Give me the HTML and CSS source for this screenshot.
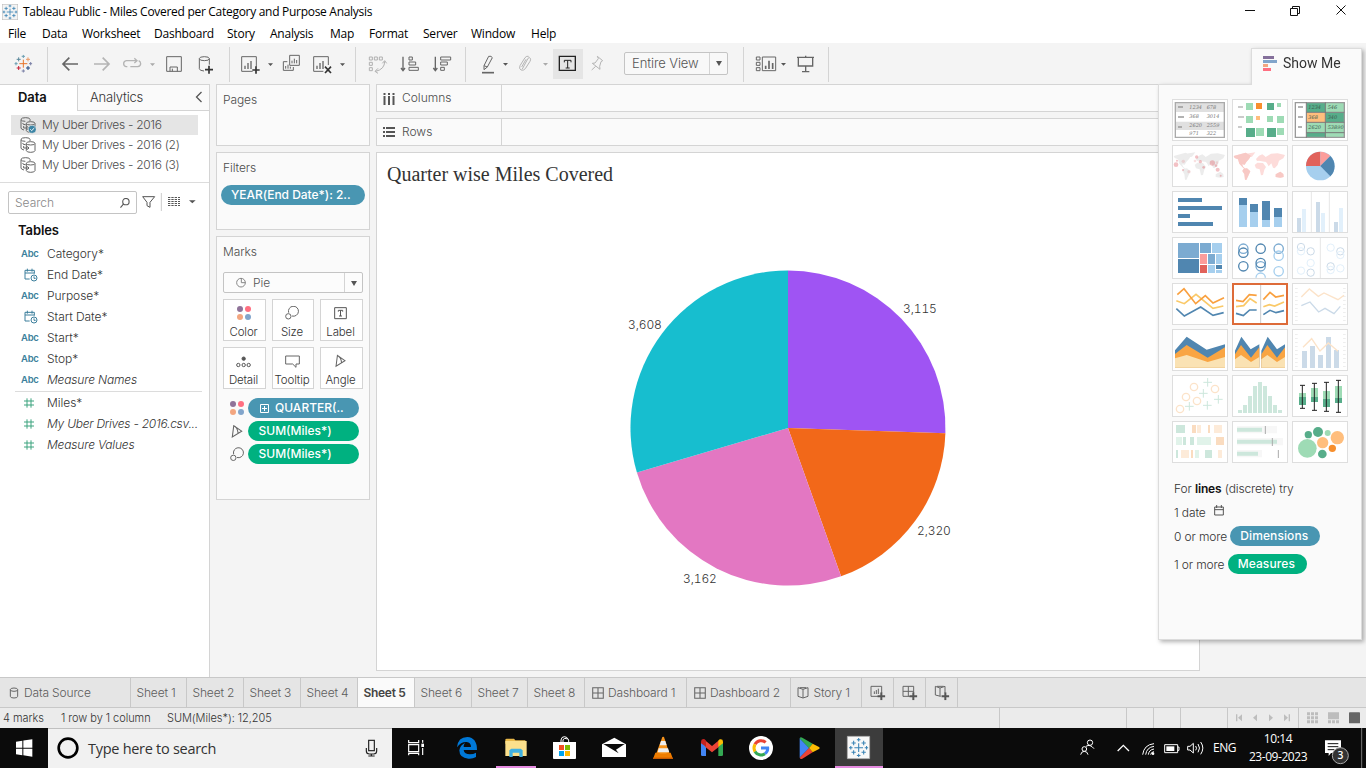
FILE: index.html
```html
<!DOCTYPE html>
<html lang="en">
<head>
<meta charset="utf-8">
<title>Tableau Public - Miles Covered per Category and Purpose Analysis</title>
<link rel="stylesheet" href="styles.css">
</head>
<body>
<svg class="defs" width="0" height="0">
  <defs>
    <symbol id="crosses" viewBox="0 0 54 54">
      <path class="k1" d="M27 15v24M15 27h24"/>
      <path class="k2" d="M27 0v10M22 5h10M0 27h10M5 22v10"/>
      <path class="k3" d="M44 27h10M49 22v10M27 44v10M22 49h10"/>
      <path class="k4" d="M13 8v12M7 14h12"/>
      <path class="k5" d="M41 8v12M35 14h12"/>
      <path class="k6" d="M13 34v12M7 40h12"/>
      <path class="k7" d="M41 34v12M35 40h12"/>
    </symbol>
    <symbol id="datasource" viewBox="0 0 48 48">
      <g fill="none" stroke="#666" stroke-width="3">
        <path d="M30 12V7Q30 2 17 2T3 7v26q0 4 9 6M3 8q2 5 13 5"/>
        <path d="M19 20v21q1 5 13 5t13-5V20"/><ellipse cx="32" cy="19" rx="13" ry="5"/>
        <path d="M8 18q0 6 9 5M11 27v6h15M22 28l5 5-5 5"/>
      </g>
    </symbol>
    <symbol id="calclock" viewBox="0 0 42 42">
      <g fill="none" stroke="#3c7f9c" stroke-width="3"><path d="M17 33H3V7h28v10M3 15h28M10 2v9M24 2v9"/><circle cx="30" cy="30" r="9"/><path d="M30 25v6h5"/></g>
    </symbol>
    <symbol id="hash" viewBox="0 0 30 30"><path d="M9 1v28M21 1v28M0 9h30M0 21h30" fill="none" stroke="#3da37f" stroke-width="3"/></symbol>
    <symbol id="dots" viewBox="0 0 42 42"><circle cx="9" cy="9" r="9" fill="#8f7399"/><circle cx="33" cy="9" r="9" fill="#ff6f81"/><circle cx="9" cy="33" r="9" fill="#f3a680"/><circle cx="33" cy="33" r="9" fill="#82a5cb"/></symbol>
    <symbol id="size" viewBox="0 0 42 42"><g fill="none" stroke="#666" stroke-width="3"><path d="M11 20A15 15 0 1 1 21 30"/><circle cx="10" cy="31" r="8"/></g></symbol>
    <symbol id="angle" viewBox="0 0 32 36"><path d="M7 2L3 33 29 17ZM7 2Q17 6 19 22" fill="none" stroke="#666" stroke-width="3"/></symbol>
    <symbol id="grid4" viewBox="0 0 34 34"><path d="M2 2h30v30H2zM17 2v30M2 17h30" fill="none" stroke="#666" stroke-width="3"/></symbol>
    <symbol id="book" viewBox="0 0 34 36"><path d="M17 7L2 2v26l15 5 15-5V2ZM17 7v26M7 2h20" fill="none" stroke="#666" stroke-width="3"/></symbol>
    <symbol id="plus" viewBox="0 0 24 24"><path d="M12 0v24M0 12h24" stroke="#555" stroke-width="6"/></symbol>
  </defs>
</svg>

<header class="titlebar">
  <svg class="applogo blue" width="16" height="16" viewBox="-2 -2 58 58"><rect x="-2" y="-2" width="58" height="58" fill="#f4f4f4" stroke="#bbb" stroke-width="4"/><use href="#crosses" width="54" height="54"/></svg>
  <span class="apptitle">Tableau Public - Miles Covered per Category and Purpose Analysis</span>
  <svg class="winctl" width="126" height="20" viewBox="1240 0 126 20" fill="none" stroke="#111"><path d="M1245 10.500h10M1290.500 8.500h7v7h-7zM1292.500 8V6.500h7v7H1298M1336.500 5.500l9 9M1345.500 5.500l-9 9"/></svg>
</header>

<nav class="menubar"><span>File</span><span>Data</span><span>Worksheet</span><span>Dashboard</span><span>Story</span><span>Analysis</span><span>Map</span><span>Format</span><span>Server</span><span>Window</span><span>Help</span></nav>

<div class="toolbar">
  <svg class="logo" width="47" height="41" viewBox="0 129 141 123"><use href="#crosses" x="43" y="164" width="54" height="54"/></svg>
  <i class="sep"></i>
  <svg width="181" height="41" viewBox="144 129 543 123" fill="none" stroke="#666" stroke-width="3">
    <path stroke-width="5" d="M234 192H190M208 173l-19 19 19 19"/><path stroke="#b4b4b4" stroke-width="5" d="M282 192h44M308 173l19 19-19 19"/>
    <path stroke="#b4b4b4" d="M382 200h-4q-7-2-7-9t8-9h30M403 175l8 7-8 7M410 182M391 200h22q9-2 9-9 0-6-6-9" stroke-width="4"/>
    <path fill="#aaa" stroke="none" d="M450 190h15l-7.500 8z"/>
    <path d="M500 170h44v44h-44zM510 214v-13h22v13M517 214v-8"/>
    <ellipse cx="613" cy="176" rx="15" ry="6"/><path d="M598 176v30q0 6 14 7M628 176v18"/><path stroke="#333" stroke-width="5" d="M627 197v24M615 209h24"/>
  </svg>
  <i class="sep"></i>
  <svg width="125" height="41" viewBox="690 129 375 123" fill="none" stroke="#666" stroke-width="3">
    <path d="M758 214h-33v-44h44v30"/><path stroke-width="4" d="M735 207v-10M744 207v-18M753 207v-24"/><path stroke="#333" stroke-width="5" d="M768 199v22M757 210h22"/>
    <path fill="#555" stroke="none" d="M804 190h15l-7.500 8zM1020 190h15l-7.500 8z"/>
    <path d="M869 166h29v30h-29zM862 185h-12v26h30v-10"/><path d="M876 190v-8M883 190v-14M890 190v-10M857 206v-8M864 206v-12M871 206v-6"/>
    <path d="M970 214h-29v-44h44v25"/><path stroke-width="4" d="M951 207v-10M960 207v-18M969 207v-24"/><path stroke="#333" stroke-width="5" d="M975 200l18 19M993 200l-18 19"/>
  </svg>
  <i class="sep"></i>
  <svg width="109" height="41" viewBox="1068 129 327 123" fill="none" stroke="#666" stroke-width="3">
    <path stroke="#b0b0b0" d="M1108 171h9v9h-9zM1123 171h9v9h-9zM1138 171h9v9h-9zM1108 187h9v9h-9zM1108 203h9v9h-9zM1154 184q0 24-27 30M1147 190l7-8 6 8M1134 205l-9 9 9 6"/>
    <path d="M1209 170v41M1203 204l6 8 6-8" stroke-width="4"/><path d="M1227 171h10v9h-10zM1227 186h20v9h-20zM1227 202h28v9h-28z"/>
    <path d="M1306 170v41M1300 204l6 8 6-8" stroke-width="4"/><path d="M1322 171h30v9h-30zM1322 186h20v9h-20zM1322 202h11v9h-11z"/>
  </svg>
  <i class="sep"></i>
  <svg width="87" height="41" viewBox="168 129 261 123" fill="none" stroke="#666" stroke-width="3">
    <path d="M222 197l14-28q8-2 11 4l-15 28-10 8zM222 197l10 4"/><path stroke-width="5" d="M216 218h36"/>
    <path fill="#555" stroke="none" d="M279 189h15l-7.500 8z"/><path fill="#aaa" stroke="none" d="M399 189h15l-7.500 8z"/>
    <path stroke="#b4b4b4" d="M337 207l17-32q4-5 7 0 2 4-1 9l-14 22q-6 7-13 4-7-4-3-13l15-24q5-6 11-4M348 178l-13 23"/>
  </svg>
  <div class="textbtn"><svg width="30" height="30" viewBox="429 147 90 90" fill="none" stroke="#222" stroke-width="3"><path d="M448 169h48v42h-48z" stroke-width="4"/><path d="M463 187v-6h20v6M473 181v23M467 204h12"/></svg></div>
  <svg width="41" height="41" viewBox="519 129 123 123" fill="none" stroke="#b4b4b4" stroke-width="3"><path d="M562 169l16 13-5 3-4 14 1 9-23-18 8-1 10-13zM557 199l-12 11"/></svg>
  <div class="fit"><span>Entire View</span><b class="caret"></b></div>
  <i class="sep last"></i>
  <svg width="84" height="41" viewBox="1002 129 252 123" fill="none" stroke="#666" stroke-width="3">
    <path d="M1039 171h11v9h-11zM1039 187h11v9h-11zM1039 203h11v9h-11zM1057 171h40v41h-40z"/><path d="M1067 207v-10M1077 207v-25M1088 207v-18" stroke-width="5"/>
    <path fill="#555" stroke="none" d="M1113 189h15l-7.500 8z"/>
    <path d="M1161 172h51M1187 167v5M1165 173v25h43v-25M1187 198v16M1176 215h22" stroke-width="4"/>
  </svg>
  <i class="sep"></i>
</div>

<main class="work">
  <aside class="side">
    <div class="sidetabs"><b>Data</b><span>Analytics<svg width="8" height="12" viewBox="0 0 8 12"><path d="M6.500 1L1.500 6l5 5" fill="none" stroke="#555" stroke-width="1.300"/></svg></span></div>
    <ul class="sources">
      <li class="on"><svg width="16" height="17" viewBox="0 0 48 51"><use href="#datasource" width="48" height="48"/><circle cx="37" cy="37" r="12" fill="#3c85a5" stroke="#e6e6e6" stroke-width="2"/><path d="M31 37l4 4 8-8" fill="none" stroke="#fff" stroke-width="3"/></svg>My Uber Drives - 2016</li>
      <li><svg width="16" height="16"><use href="#datasource"/></svg>My Uber Drives - 2016 (2)</li>
      <li><svg width="16" height="16"><use href="#datasource"/></svg>My Uber Drives - 2016 (3)</li>
    </ul>
    <div class="searchrow">
      <div class="search"><span>Search</span><svg width="10" height="10" viewBox="0 0 11 11" fill="none" stroke="#555" stroke-width="1.200"><circle cx="6.500" cy="4" r="3.500"/><path d="M4 6.500L.5 10.500"/></svg></div>
      <svg width="60" height="24" viewBox="411 315 180 72" fill="none" stroke="#555" stroke-width="3"><path d="M428 338h36l-14 17v15l-9-5v-10z"/><path stroke="#ccc" d="M484 327v54"/><path stroke-dasharray="7 3" d="M504 340.500h36M504 346.500h36M504 352.500h36M504 358.500h36M504 364.500h36"/><path d="M567 349h20l-10 9z" fill="#555" stroke="none"/></svg>
    </div>
    <h2>Tables</h2>
    <ul class="fields">
      <li><em>Abc</em>Category*</li>
      <li><svg width="14" height="14"><use href="#calclock"/></svg>End Date*</li>
      <li><em>Abc</em>Purpose*</li>
      <li><svg width="14" height="14"><use href="#calclock"/></svg>Start Date*</li>
      <li><em>Abc</em>Start*</li>
      <li><em>Abc</em>Stop*</li>
      <li class="it mn"><em>Abc</em>Measure Names</li>
    </ul>
    <ul class="fields meas">
      <li><svg width="10" height="10"><use href="#hash"/></svg>Miles*</li>
      <li class="it csv"><svg width="10" height="10"><use href="#hash"/></svg>My Uber Drives - 2016.csv...</li>
      <li class="it mn"><svg width="10" height="10"><use href="#hash"/></svg>Measure Values</li>
    </ul>
  </aside>

  <section class="cards">
    <div class="card pages"><h3>Pages</h3></div>
    <div class="card filters"><h3>Filters</h3><div class="pill dim year">YEAR(End Date*): 2..</div></div>
    <div class="card marks"><h3>Marks</h3>
      <div class="marktype"><svg width="11" height="11" viewBox="0 0 33 33" fill="none" stroke="#888" stroke-width="3"><circle cx="15" cy="17" r="13"/><path d="M16 17V3M16 17h13"/></svg><span>Pie</span><b class="caret"></b></div>
      <div class="btns">
        <div><svg width="14" height="14"><use href="#dots"/></svg>Color</div>
        <div><svg width="14" height="14"><use href="#size"/></svg>Size</div>
        <div><svg width="13" height="14" viewBox="0 0 39 42" fill="none" stroke="#555" stroke-width="3"><path d="M2 5h35v33H2zM13 17v-4h13v4M19.500 13v17M15 30h9"/></svg>Label</div>
        <div><svg width="15" height="14" viewBox="0 0 45 42" fill="none" stroke="#555" stroke-width="3"><circle cx="23" cy="14" r="5" fill="#555"/><circle cx="7" cy="33" r="5"/><circle cx="23" cy="33" r="5"/><circle cx="38" cy="33" r="5"/></svg>Detail</div>
        <div><svg width="15" height="14" viewBox="0 0 45 42" fill="none" stroke="#666" stroke-width="3"><path d="M2 6h41v24H33v10L23 30H2z"/></svg>Tooltip</div>
        <div><svg width="11" height="14"><use href="#angle"/></svg>Angle</div>
      </div>
      <div class="enc"><svg width="14" height="14"><use href="#dots"/></svg><div class="pill dim q"><svg width="9" height="9" viewBox="0 0 9 9" fill="none" stroke="#fff"><path d="M.5.5h8v8h-8zM4.500 2v5M2 4.500h5"/></svg>QUARTER(..</div></div>
      <div class="enc"><svg width="14" height="13"><use href="#angle"/></svg><div class="pill mea">SUM(Miles*)</div></div>
      <div class="enc"><svg width="14" height="15"><use href="#size"/></svg><div class="pill mea">SUM(Miles*)</div></div>
    </div>
  </section>

  <section class="view">
    <div class="shelf"><span><svg width="12" height="13" viewBox="0 0 12 13"><path d="M1.500 1v2M1.500 4v9M6 1v2M6 4v9M10.500 1v2M10.500 4v9" stroke="#555" stroke-width="2"/></svg>Columns</span></div>
    <div class="shelf"><span><svg width="12" height="13" viewBox="0 0 12 13"><path d="M0 2h2M3 2h9M0 6h2M3 6h9M0 10h2M3 10h9" stroke="#555" stroke-width="2"/></svg>Rows</span></div>
    <div class="canvas">
      <h1>Quarter wise Miles Covered</h1>
      <svg class="pie" width="816" height="470" viewBox="380 198 816 470">
        <path fill="#9f54f3" d="M788 428V270.500A157.500 157.500 0 0 1 945.400 433.200Z"/>
        <path fill="#f26819" d="M788 428L945.400 433.200A157.500 157.500 0 0 1 841.060 576.300Z"/>
        <path fill="#e377c2" d="M788 428L841.060 576.300A157.500 157.500 0 0 1 636.900 472.500Z"/>
        <path fill="#17becf" d="M788 428L636.900 472.500A157.500 157.500 0 0 1 788 270.500Z"/>
        <g class="val"><text x="903" y="313">3,115</text><text x="917" y="535">2,320</text><text x="683" y="583">3,162</text><text x="628" y="329">3,608</text></g>
      </svg>
    </div>
  </section>
</main>

<footer class="tabs">
  <span class="src"><svg width="10" height="12" viewBox="0 0 30 36" fill="none" stroke="#666" stroke-width="3"><ellipse cx="15" cy="8" rx="11" ry="5"/><path d="M4 8v20q0 5 11 5t11-5V8"/></svg>Data Source</span>
  <span class="w56">Sheet 1</span><span>Sheet 2</span><span>Sheet 3</span><span>Sheet 4</span><span class="on">Sheet 5</span><span>Sheet 6</span><span class="w56">Sheet 7</span><span>Sheet 8</span>
  <span class="dash"><svg width="12" height="12"><use href="#grid4"/></svg>Dashboard 1</span><span class="dash d2"><svg width="12" height="12"><use href="#grid4"/></svg>Dashboard 2</span>
  <span class="story"><svg width="12" height="12"><use href="#book"/></svg>Story 1</span>
  <span class="new"><svg width="16" height="16" viewBox="0 0 48 48" fill="none" stroke="#666" stroke-width="3"><path d="M24 34H3V4h32v20M13 27v-8M19 27V15M25 27V11"/><use href="#plus" x="22" y="22" width="24" height="24"/></svg></span>
  <span class="new"><svg width="16" height="16" viewBox="0 0 48 48" fill="none" stroke="#666" stroke-width="3"><path d="M24 34H3V4h32v20M19 4v30M3 19h32"/><use href="#plus" x="22" y="22" width="24" height="24"/></svg></span>
  <span class="new"><svg width="16" height="16" viewBox="0 0 48 48" fill="none" stroke="#666" stroke-width="3"><path d="M20 34L4 30V4l14 5 15-5v20M18 9v25M9 4h20"/><use href="#plus" x="22" y="22" width="24" height="24"/></svg></span>
</footer>

<div class="status">
  <span class="s1">4 marks</span><span class="s2">1 row by 1 column</span><span class="s3">SUM(Miles*): 12,205</span>
  <svg width="367" height="20" viewBox="117 113 1101 60" fill="#bdbdbd">
    <path fill="none" stroke="#c8c8c8" stroke-width="3" d="M118.500 113v60M499.500 113v60M580.500 113v60M661.500 113v60M802.500 113v60M1015.500 113v60"/>
    <path d="M828 132h4v21h-4zM846 132v21l-12-10.500zM891 132v21l-12-10.500zM927 132v21l12-10.500zM972 132v21l12-10.500zM986 132h4v21h-4z"/>
    <path d="M1041 126h9v9h-9zM1053 126h9v9h-9zM1065 126h9v9h-9zM1041 138h9v9h-9zM1053 138h9v9h-9zM1065 138h9v9h-9zM1041 150h9v9h-9zM1053 150h9v9h-9zM1065 150h9v9h-9zM1104 126h33v21h-33zM1104 150h9v9h-9zM1116 150h9v9h-9zM1128 150h9v9h-9z"/><rect x="1167" y="126" width="33" height="33" rx="2" fill="#666"/>
  </svg>
</div>

<div class="taskbar">
  <svg width="48" height="40" viewBox="0 174 144 120"><path fill="#fff" d="M48 215l19-3v21H48zM70 211.500l27-3.500v25H70zM48 236h19v20l-19-3zM70 236h27v24l-27-4z"/></svg>
  <div class="tsearch">
    <svg width="40" height="40" viewBox="144 174 120 120"><circle cx="204" cy="234" r="28" fill="none" stroke="#000" stroke-width="8"/></svg>
    <span>Type here to search</span>
    <svg width="40" height="40" viewBox="1056 174 120 120" fill="none" stroke="#222" stroke-width="3.500"><rect x="1106" y="211" width="17" height="31"/><path d="M1099 234v9q0 9 9 9h13q9 0 9-9v-9M1114 252v7M1105 258h19"/></svg>
  </div>
  <svg width="50" height="40" viewBox="1176 174 150 120" fill="none" stroke="#fff" stroke-width="3.500"><path d="M1226 210v8h30v-8M1226 224h30v21h-30zM1226 256v-6h30v6M1268 210v8M1268 234v21"/><rect x="1264" y="221" width="8" height="10" fill="#fff" stroke="none"/></svg>
  <svg width="49" height="40" viewBox="1326 174 147 120"><path fill="#0078d7" d="M1371 232Q1374 201 1402 201Q1431 203 1431 240H1391Q1393 253 1410 253Q1420 253 1428 248V261Q1418 267 1405 266Q1378 264 1378 241Q1381 225 1395 219Q1390 225 1391 231H1413Q1413 217 1400 216Q1383 215 1371 232Z"/></svg>
  <div class="task run"><svg width="49" height="40" viewBox="63 174 147 120"><path fill="#e9b949" d="M106 209q0-3 4-3h22l4 5h30v10h-60z"/><path fill="#fbe08c" d="M106 213h64v45h-64z"/><path fill="#41b1e1" d="M118 261v-20l6-5h28l6 5v20h-10v-13h-20v13z"/></svg></div>
  <svg width="49" height="40" viewBox="210 174 147 120"><path fill="none" stroke="#fff" stroke-width="3" d="M273 220v-10q1-10 10-10t13 10v9M279 217v-8q4-7 14-2"/><path fill="#fff" d="M249 216h69v49q0 2-3 2h-63q-3 0-3-2z"/><path fill="#f25022" d="M267 225h15v15h-15z"/><path fill="#7fba00" d="M285 225h15v15h-15z"/><path fill="#00a4ef" d="M267 243h15v15h-15z"/><path fill="#ffb900" d="M285 243h15v15h-15z"/></svg>
  <svg width="49" height="40" viewBox="357 174 147 120"><path fill="#fff" d="M396 223l37-20 35 20v38h-72z"/><path fill="#0b0b0b" d="M400 222h64l-26 17 8 11z"/></svg>
  <svg width="49" height="40" viewBox="504 174 147 120"><path fill="#f7941d" d="M577 201q3-2 5 0l17 52h-41z"/><path fill="#eee" d="M573 213h13l4 13h-21zM566 235h28l4 12h-35z"/><path fill="#ef7d00" d="M556 248h8q15 7 30 0h8l7 19h-60z"/><path fill="#c95a00" d="M549 263h60v4h-60z"/></svg>
  <svg width="49" height="40" viewBox="651 174 147 120"><path fill="#4285f4" d="M693 215l15 11v32h-11q-4 0-4-4z"/><path fill="#34a853" d="M745 226l14-11v39q0 4-4 4h-10z"/><path fill="#ea4335" d="M705 211l21 17 21-17v19l-21 17-21-17z"/><path fill="#c5221f" d="M693 215q0-10 11-7l4 4v18l-15-10z"/><path fill="#fbbc04" d="M759 215q0-9-10-7l-4 4v18l14-10z"/></svg>
  <svg width="49" height="40" viewBox="798 174 147 120"><circle cx="873" cy="234" r="36" fill="#fff"/><g fill="none" stroke-width="9"><path stroke="#ea4335" d="M855 223a21 21 0 0 1 32-6"/><path stroke="#fbbc05" d="M855 223a23 23 0 0 0 0 22"/><path stroke="#34a853" d="M855 245a21 21 0 0 0 30 6"/><path stroke="#4285f4" d="M885 251q9-7 8-17H873"/></g></svg>
  <svg width="50" height="40" viewBox="945 174 150 120"><path fill="#4285f4" d="M989 205v58l29-29z"/><path fill="#34a853" d="M989 205q2-5 8-2l31 18-11 13z"/><path fill="#ea4335" d="M989 263q2 6 8 3l31-19-11-13z"/><path fill="#fbbc04" d="M1028 221l19 10q5 3 0 6l-19 10-11-13z"/></svg>
  <div class="task run active"><svg class="blue" width="48" height="40" viewBox="1095 174 144 120"><path fill="#f8f8f8" stroke="#aaa" stroke-width="2" d="M1132 199h67v67h-67z"/><use href="#crosses" x="1137" y="204" width="58" height="58"/></svg></div>
  <i class="grow"></i>
  <svg width="130" height="40" viewBox="350 174 390 120" fill="none" stroke="#fff" stroke-width="3">
    <circle cx="389" cy="218" r="8"/><path d="M377 229q12-8 24 7M373 240"/><circle cx="372" cy="237" r="7"/><path d="M361 254q2-10 11-10t11 10"/>
    <path d="M472 243l17-17 17 17" stroke-width="4"/>
    <path d="M547 254q4-30 34-33M556 254q3-22 25-25M564 254q2-15 17-17M571 254q1-8 10-9"/><circle cx="578" cy="251" r="4" fill="#fff" stroke="none"/>
    <path d="M613 224h39v24h-39zM652 231h4v10h-4"/><path d="M618 229h24v14h-24z" fill="#fff" stroke="none"/>
    <path d="M682 229h7l10-9v29l-10-9h-7zM706 228q5 7 0 13M713 222q9 12 0 25M721 216q13 18 0 37"/>
  </svg>
  <span class="lang">ENG</span>
  <div class="clock"><span>10:14</span><span>23-09-2023</span></div>
  <svg width="58" height="40" viewBox="1044 174 174 120"><path fill="#fff" d="M1095 211h48v38h-30l-7 9v-9h-11z"/><path d="M1103 221h32M1103 230h32M1103 239h20" stroke="#111" stroke-width="3"/><circle cx="1141" cy="257" r="24" fill="#333" stroke="#aaa" stroke-width="3"/><text class="badge" x="1141" y="268">3</text><path d="M1205 174v120" stroke="#777" stroke-width="3"/></svg>
</div>

<aside class="showme">
  <div class="smtab"><svg width="14" height="15" viewBox="0 0 42 45"><path fill="#85709b" d="M0 0h33v9H0z"/><path fill="#82a5cb" d="M0 12h42v9H0z"/><path fill="#f3a680" d="M0 24h15v9H0z"/><path fill="#ff6f81" d="M0 36h24v9H0z"/></svg>Show Me</div>
  <div class="smbody">
    <div class="thumbs">
      <svg viewBox="0 0 168 126"><path fill="#e0e0e0" d="M9 9h150v30H9zM9 68h150v25H9z"/><path fill="none" stroke="#aaa" stroke-width="4" d="M10 11h147v104H10z"/><path stroke="#999" stroke-width="5" d="M18 24h15M18 54h18M18 84h12"/><g class="tn"><text x="52" y="30">1234</text><text x="104" y="30">678</text><text x="52" y="57">368</text><text x="104" y="57">3014</text><text x="52" y="84">2620</text><text x="104" y="84">2559</text><text x="52" y="108">971</text><text x="104" y="108">322</text></g></svg>
      <svg viewBox="0 0 168 126"><path stroke="#bbb" stroke-width="5" d="M18 24h15M18 54h18M18 84h12"/><path fill="#9edbb5" d="M42 12h21v21H42zM135 12h12v12h-12zM42 51h21v21H42zM105 51h18v18h-18zM135 51h21v21h-21zM72 87h24v24H72zM135 87h21v21h-21z"/><path fill="#57ad8a" d="M105 12h21v21h-21zM42 87h27v27H42zM105 87h27v27h-27z"/><path fill="#f78f2d" d="M72 12h18v18H72z"/><path fill="#ffbe7d" d="M72 51h12v12H72z"/></svg>
      <svg viewBox="0 0 168 126"><path fill="#57ad8a" d="M44 10h57v30H44zM101 41h56v29h-56zM44 101h57v15H44z"/><path fill="#9edbb5" d="M101 10h56v30h-56zM44 71h113v30H44zM101 101h56v15h-56z"/><path fill="#ffbe7d" d="M44 41h57v30H44z"/><path fill="none" stroke="#9a9a9a" stroke-width="4" d="M10 11h147v104H10z"/><path fill="none" stroke="#777" stroke-width="3" d="M43 10v106M100 10v106M43 40h114M43 70h114M43 101h114"/><path stroke="#999" stroke-width="5" d="M18 24h15M18 54h15M18 84h12"/><g class="tn dk"><text x="49" y="30">1234</text><text x="107" y="30">546</text><text x="49" y="61">368</text><text x="107" y="61">340</text><text x="49" y="91">2620</text><text x="107" y="91">53890</text></g></svg>

      <svg viewBox="0 0 168 126"><g fill="#ececec"><path id="world" d="M5 33l22-6 14-4 8 5 8 4-6 10-8 9-5 8-8-1 4 8 8 7-8-4-12-13-4-13-10-4zM42 26l28-4-10 13-8 2zM35 71l10-1 10 9-5 11-7 15-4-1-2-17-6-9zM72 42l9-10 10-4 8 6 6 9-8 7-16-3-6 1zM68 60l8-7 17 1 9 12-5 8-4 16-6 1-4-18-11-3zM101 36l16-10 20-1 22 5-5 10-13 7-4 13-9 10-5-2-5-13-8 9-6-11-8-6zM131 88l14-8 9 7 1 9-10 2-14-2z"/></g><g fill="#e15f68" opacity=".38"><circle cx="12" cy="59" r="7"/><circle cx="15" cy="47" r="3"/><circle cx="34" cy="49" r="5" opacity=".5"/><circle cx="74" cy="36" r="5"/><circle cx="69" cy="48" r="4" opacity=".5"/><circle cx="85" cy="50" r="5"/><circle cx="33" cy="75" r="3"/><circle cx="51" cy="80" r="5" opacity=".5"/><circle cx="95" cy="67" r="4"/><circle cx="121" cy="54" r="8"/><circle cx="135" cy="53" r="4" opacity=".5"/><circle cx="132" cy="62" r="4"/><circle cx="137" cy="74" r="6"/><circle cx="146" cy="92" r="3"/></g></svg>
      <svg viewBox="0 0 168 126"><use href="#world" fill="#fddcda"/><path fill="#f8c9c5" d="M5 33l22-6 14-4 8 5 8 4-6 10-8 9-5 8-8-1 4 8 8 7-8-4-12-13-4-13-10-4zM35 71l10-1 10 9-5 11-7 15-4-1-2-17-6-9zM131 88l14-8 9 7 1 9-10 2-14-2z"/></svg>
      <svg viewBox="0 0 168 126"><circle cx="85" cy="63" r="43" fill="#a6cfee"/><path fill="#e1625b" d="M85 63H42a43 43 0 0 1 43-43z"/><path fill="#fc9d9b" d="M85 63V20a43 43 0 0 1 30 13z"/><path fill="#5086b0" d="M85 63l30-30a43 43 0 0 1 0 61z"/></svg>

      <svg viewBox="0 0 168 126"><path fill="#5086b0" d="M18 21h72v12H18zM18 45h132v12H18zM18 69h36v12H18zM18 93h105v12H18z"/></svg>
      <svg viewBox="0 0 168 126"><path fill="#a6cfee" d="M21 42h24v66H21zM54 63h24v45H54zM90 87h24v21H90zM126 78h24v30h-24z"/><path fill="#5086b0" d="M21 21h24v21H21zM54 39h24v24H54zM90 30h24v57H90zM126 51h24v27h-24z"/></svg>
      <svg viewBox="0 0 168 126"><path stroke="#e6e6e6" stroke-width="3" d="M58 3v120M112 3v120"/><path fill="#cbdae8" d="M15 81h12v42H15zM72 33h12v90H72zM126 93h12v30h-12z"/><path fill="#e2f0fb" d="M30 54h12v69H30zM87 66h12v57H87zM141 51h12v72h-12z"/></svg>

      <svg viewBox="0 0 168 126"><path fill="#7cabd1" d="M18 18h63v45H18zM84 18h33v30H84zM108 51h21v30h-21z"/><path fill="#5086b0" d="M18 66h63v42H18zM132 84h18v12h-18z"/><path fill="#a6cfee" d="M120 18h30v30h-30zM132 51h18v30h-18zM108 84h21v24h-21zM132 99h18v9h-18z"/><path fill="#fc9d9b" d="M84 51h21v30H84z"/><path fill="#e1625b" d="M84 84h21v24H84z"/></svg>
      <svg viewBox="0 0 168 126" fill="none" stroke-width="4"><g stroke="#7cabd1"><circle cx="34" cy="35" r="14"/><circle cx="86" cy="88" r="14"/><circle cx="140" cy="35" r="14"/></g><g stroke="#5086b0"><circle cx="34" cy="47" r="14"/><circle cx="34" cy="88" r="14"/><circle cx="86" cy="35" r="14"/><circle cx="86" cy="78" r="14"/></g><g stroke="#a6cfee"><circle cx="140" cy="56" r="14"/><circle cx="140" cy="103" r="14"/><path d="M72 122a14 14 0 0 1 28 0"/></g></svg>
      <svg viewBox="0 0 168 126" fill="none" stroke-width="3"><path stroke="#e6e6e6" d="M85 3v120"/><g stroke="#cbdae8"><circle cx="27" cy="30" r="11"/><circle cx="56" cy="43" r="11"/><circle cx="56" cy="107" r="11"/><circle cx="145" cy="43" r="11"/><circle cx="116" cy="88" r="11"/></g><g stroke="#e2f0fb"><circle cx="27" cy="43" r="11"/><circle cx="56" cy="78" r="11"/><circle cx="27" cy="101" r="11"/><circle cx="116" cy="32" r="11"/><circle cx="145" cy="54" r="11"/><circle cx="145" cy="94" r="11"/><circle cx="116" cy="99" r="11"/></g></svg>

      <svg viewBox="0 0 168 126" fill="none" stroke-width="5"><path stroke="#fac968" d="M13 53l24 9 35-28 51 42 31-7"/><path stroke="#f9a03f" d="M16 35l20-18 35 45 29-24 23 22 33-16"/><path stroke="#5086b0" d="M13 77l24 22 49-27 37 25 32-8"/></svg>
      <svg class="picked" viewBox="0 0 168 126" fill="none" stroke-width="5"><path stroke="#ccc" stroke-width="3" d="M86 6v114"/><path stroke="#fac968" d="M12 71l23-3 19-21 20 13M94 71l18-6 16 4 28-12"/><path stroke="#f9a03f" d="M12 52l21 4 19-21 22 2M94 50l20-22 17 14 25-5"/><path stroke="#5086b0" d="M12 91l22 7 19-17h21M94 95l20-13 18 7 24-6"/></svg>
      <svg viewBox="0 0 168 126" fill="none" stroke-width="4"><path stroke="#eee" stroke-dasharray="3 9" stroke-width="8" d="M13 15v102M157 15v102"/><path stroke="#fce3c9" d="M28 42l24-24 27 22 17-10 42 20 18-13"/><path stroke="#cbdae8" d="M28 68l26-11 26 30 19-11 27 16 19-22"/></svg>

      <svg viewBox="0 0 168 126"><path fill="#5086b0" d="M9 64l35-41 60 39 55-16v70H9z"/><path fill="#f9a543" d="M9 75l35-27 63 38 52-31v61H9z"/><path fill="#fae2b3" d="M9 88l35-10 63 21 52-15v32H9z"/></svg>
      <svg viewBox="0 0 168 126"><path fill="#5086b0" d="M9 65l19-42 28 38 26-15v70H9zM88 65l19-42 28 38 24-15v70H88z"/><path fill="#f9a543" d="M9 76l18-28 30 38 25-31v61H9zM88 76l18-28 29 38 24-31v61H88z"/><path fill="#fae2b3" d="M9 91l18-13 30 21 25-15v32H9zM88 91l18-13 29 21 24-15v32H88z"/></svg>
      <svg viewBox="0 0 168 126"><path fill="none" stroke="#eee" stroke-dasharray="3 9" stroke-width="8" d="M13 15v102M157 15v102"/><path fill="#cbdae8" d="M30 66h15v51H30zM54 51h15v66H54zM78 78h15v39H78zM102 24h15v93h-15zM126 63h15v54h-15z"/><path fill="none" stroke="#fce3c9" stroke-width="4" d="M33 55l26-26 25 37 25-24 29 25"/></svg>

      <svg viewBox="0 0 168 126" fill="none" stroke-width="4"><g stroke="#fce3c9"><circle cx="66" cy="36" r="11"/><circle cx="129" cy="42" r="11"/><circle cx="42" cy="66" r="11"/><circle cx="75" cy="78" r="11"/><circle cx="24" cy="102" r="11"/></g><path stroke="#cde7dc" stroke-width="3" d="M94 22h26M107 9v26M81 55h26M94 42v26M126 73h26M139 60v26M39 94h26M52 81v26M93 91h26M106 78v26"/></svg>
      <svg viewBox="0 0 168 126"><path fill="#cde7dc" d="M18 105h12v9H18zM33 90h12v24H33zM48 63h12v51H48zM63 33h12v81H63zM78 21h12v93H78zM93 33h12v81H93zM108 63h12v51h-12zM123 90h12v24h-12zM138 105h12v9h-12z"/></svg>
      <svg viewBox="0 0 168 126"><path fill="#9edbb5" d="M21 54h21v12H21zM57 39h21v27H57zM93 48h21v24H93zM129 33h21v36h-21z"/><path fill="#57ad8a" d="M21 66h21v24H21zM57 66h21v15H57zM93 72h21v24H93zM129 69h21v15h-21z"/><path fill="none" stroke="#222" stroke-width="3" d="M24 31h15M31 31v69M24 100h15M60 25h15M67 25v81M60 106h15M96 22h15M103 22v87M96 109h15M132 16h15M139 16v96M132 112h15"/></svg>

      <svg viewBox="0 0 168 126"><path fill="#cde7dc" d="M12 12h27v24H12zM33 48h9v24h-9zM54 48h12v24H54zM12 87h6v24h-6zM99 87h21v24H99z"/><path fill="#fadcc0" d="M60 12h12v24H60zM108 12h6v24h-6zM132 48h24v24h-24zM57 87h6v24h-6z"/><path fill="#fdebd9" d="M75 12h12v24H75zM126 12h24v24h-24zM27 87h24v24H27zM138 87h12v24h-12z"/><path fill="#e1f3ea" d="M12 48h18v24H12zM75 48h42v24H75zM69 87h12v24H69z"/></svg>
      <svg viewBox="0 0 168 126"><path fill="#f7f7f7" d="M15 15h120v22H15zM15 51h138v22H15zM15 87h75v22H15z"/><path fill="#cde7dc" d="M15 20h75v12H15zM15 56h120v12H15zM15 92h63v12H15z"/><path stroke="#aaa" stroke-width="3" d="M100 15v24M121 51v24M139 87v24"/></svg>
      <svg viewBox="0 0 168 126"><g fill="#57ad8a"><circle cx="49" cy="41" r="11"/><circle cx="78" cy="33" r="15"/><circle cx="91" cy="99" r="13"/></g><g fill="#9edbb5"><circle cx="107" cy="36" r="9"/><circle cx="46" cy="82" r="28"/></g><g fill="#ffbe7d"><circle cx="92" cy="65" r="17"/><circle cx="136" cy="50" r="20"/></g><circle cx="121" cy="82" r="11" fill="#f78f2d"/></svg>
    </div>
    <div class="hint">
      <p class="h1">For <b>lines</b> (discrete) try</p>
      <p class="h2">1 date<svg width="10" height="11" viewBox="0 0 30 33" fill="none" stroke="#555" stroke-width="3"><path d="M2 6h26v24H2zM2 14h26M8 0v9M22 0v9"/></svg></p>
      <p class="h3">0 or more <span class="pill dim">Dimensions</span></p>
      <p class="h4">1 or more <span class="pill mea">Measures</span></p>
    </div>
  </div>
</aside>
</body>
</html>
```
FILE: styles.css
```css
* { box-sizing: border-box; }
body { margin: 0; width: 1366px; height: 768px; overflow: hidden; position: relative; background: #f4f4f4; color: #333; font: 350 12px/16px Inter, sans-serif; display: flex; flex-direction: column; }
svg { display: block; flex: none; }
ul, h1, h2, h3, p { margin: 0; padding: 0; list-style: none; font-weight: 350; }
.defs { position: absolute; }
#crosses path { fill: none; stroke-width: 3; }
.blue { --b: #3b84b5; }
#crosses .k1 { stroke: var(--b, #e8762c); }
#crosses .k2 { stroke: var(--b, #6d9fb3); }
#crosses .k3 { stroke: var(--b, #7c82a8); }
#crosses .k4 { stroke: var(--b, #5a879b); }
#crosses .k5 { stroke: var(--b, #eb9a68); }
#crosses .k6 { stroke: var(--b, #c72037); }
#crosses .k7 { stroke: var(--b, #1f447e); }

.titlebar { height: 23px; background: #fff; display: flex; align-items: center; padding-left: 2px; font: 12px/16px "Open Sans", sans-serif; color: #000; flex: none; }
.apptitle { margin-left: 5px; letter-spacing: -.29px; white-space: nowrap; }
.winctl { margin-left: auto; align-self: flex-start; }
.menubar { height: 20px; flex: none; background: #fff; padding-left: 8px; display: grid; grid-template-columns: 34px 40px 72px 73px 43px 60px 39px 54px 48px 60px 60px; font: 12px/21px "Open Sans", sans-serif; letter-spacing: -.22px; color: #000; }
.toolbar { height: 41px; flex: none; display: flex; align-items: flex-start; background: #f4f4f4; }
.sep { width: 1px; height: 35px; margin-top: 4px; background: #d4d4d4; flex: none; }
.textbtn { width: 30px; height: 30px; margin-top: 6px; background: #e5e5e5; }
.fit { width: 104px; height: 23px; margin: 9px 0 0 0; border: 1px solid #c4c4c4; border-radius: 2px; display: flex; background: #f8f8f8; font-size: 13px; line-height: 21px; color: #555; letter-spacing: -.1px; }
.fit span { width: 85px; padding-left: 7px; border-right: 1px solid #d4d4d4; }
.last { margin-left: 15px; }
.caret { width: 0; height: 0; border: 3.500px solid transparent; border-top: 5px solid #555; border-bottom: 0; margin: 8px auto 0; }

.work { height: 593px; flex: none; display: flex; margin-top: 0; }
.side { width: 210px; background: #fff; border: 1px solid #d4d4d4; border-left: 0; border-bottom: 0; display: flex; flex-direction: column; }
.sidetabs { display: flex; height: 26px; font-size: 13px; line-height: 25px; flex: none; }
.sidetabs b { width: 77px; padding-left: 18px; color: #111; font-weight: 600; letter-spacing: -.1px; }
.sidetabs span { flex: 1; padding: 0 6px 0 12px; border-left: 1px solid #d4d4d4; border-bottom: 1px solid #d4d4d4; background: #fafafa; display: flex; justify-content: space-between; letter-spacing: -.2px; }
.sidetabs svg { margin-top: 6px; }
.sources { height: 72px; padding: 4px 11px 0; border-bottom: 1px solid #dcdcdc; flex: none; letter-spacing: -.3px; color: #4c4c4c; }
.sources li { height: 20px; display: flex; align-items: center; gap: 6px; padding-left: 9px; white-space: nowrap; }
.sources .on { background: #e5e5e5; }
.searchrow { display: flex; padding: 6px 0 0 8px; height: 32px; flex: none; }
.search { width: 129px; height: 23px; margin-top: 2px; border: 1px solid #c4c4c4; border-radius: 2px; display: flex; justify-content: space-between; align-items: center; padding: 0 6px; color: #888; }
h2 { padding-left: 18px; margin-top: 7px; font-size: 13px; font-weight: 600; line-height: 16px; height: 21px; color: #111; letter-spacing: -.1px; }
.fields { border-bottom: 1px solid #dcdcdc; margin: 0 7px 0 15px; padding-bottom: 1px; letter-spacing: -.05px; }
.fields li { height: 21px; line-height: 21px; display: grid; grid-template-columns: 32px 1fr; align-items: center; white-space: nowrap; }
.fields li > svg { margin-left: 9px; }
.fields em { font-style: normal; font-size: 9.500px; font-weight: 600; color: #3c7f9c; padding-left: 6px; letter-spacing: -.25px; }
.meas { border: 0; }
.fields .it { font-style: italic; letter-spacing: -.18px; }
.fields .csv { letter-spacing: -.25px; }

.cards { width: 154px; margin-left: 6px; display: flex; flex-direction: column; gap: 6px; }
.card { border: 1px solid #d4d4d4; background: #fafafa; flex: none; padding: 0 6px; }
h3 { font-size: 12px; line-height: 16px; padding-top: 7px; color: #4c4c4c; letter-spacing: -.1px; }
.pages { height: 62px; } .filters { height: 78px; } .marks { height: 264px; }
.pill { height: 20px; border-radius: 10px; color: #fff; font-size: 12px; line-height: 20px; font-weight: 500; white-space: nowrap; }
.dim { background: #4996b2; } .mea { background: #00b180; }
.year { width: 144px; margin: 9px 0 0 -2px; padding-left: 10px; letter-spacing: -.03px; }
.marktype { width: 140px; height: 21px; margin-top: 12px; border: 1px solid #c4c4c4; border-radius: 2px; display: flex; line-height: 20px; color: #555; padding-left: 12px; background: #fcfcfc; }
.marktype svg { margin-top: 4px; }
.marktype span { width: 98px; padding-left: 6px; border-right: 1px solid #d4d4d4; }
.btns { display: grid; grid-template-columns: 43px 42px 43px; column-gap: 6px; row-gap: 6px; margin-top: 6px; width: 140px; }
.btns div { height: 42px; border: 1px solid #d4d4d4; background: #fff; display: flex; flex-direction: column; align-items: center; padding: 6px 2px 0 0; gap: 4px; font-size: 11.500px; line-height: 16px; letter-spacing: -.15px; }
.enc { display: flex; align-items: center; margin: 3px 0 0 7px; gap: 4px; }
.btns + .enc { margin-top: 9px; }
.enc .pill { width: 111px; padding-left: 10.500px; }
.enc .q { display: flex; align-items: center; gap: 6px; padding-left: 12px; }

.view { width: 824px; margin-left: 6px; display: flex; flex-direction: column; gap: 6px; }
.shelf { height: 28px; border: 1px solid #d4d4d4; background: #fafafa; display: flex; color: #4c4c4c; flex: none; }
.shelf span { width: 125px; border-right: 1px solid #d4d4d4; display: flex; align-items: center; gap: 7px; padding-left: 6px; }
.canvas { height: 519px; border: 1px solid #d4d4d4; background: #fff; flex: none; }
h1 { font: 20px/24px "Liberation Serif", serif; padding: 9px 0 0 10px; height: 45px; color: #333; }
.pie { margin-left: 3px; }
.val { fill: #333; font-size: 12px; font-variant-numeric: tabular-nums; letter-spacing: -.1px; }

.tabs { height: 31px; flex: none; background: #e5e5e5; border-top: 1px solid #c8c8c8; border-bottom: 1px solid #c8c8c8; display: flex; color: #5c5c5c; line-height: 30px; letter-spacing: -.15px; }
.tabs span { width: 57px; padding-left: 5.500px; border-right: 1px solid #c8c8c8; display: flex; align-items: center; gap: 5px; white-space: nowrap; flex: none; }
.tabs .w56 { width: 56px; }
.tabs .src { width: 131px; padding-left: 9px; }
.tabs .on { background: #fafafa; font-weight: 600; color: #444; letter-spacing: -.3px; }
.tabs .dash { width: 102px; padding-left: 7px; gap: 4px; }
.tabs .d2 { width: 104px; }
.tabs .story { width: 71px; }
.tabs .new { width: 32px; padding-left: 8px; }
.status { height: 20px; flex: none; background: #ebebeb; display: flex; font-size: 11px; line-height: 20px; letter-spacing: -.05px; white-space: nowrap; }
.s1 { padding-left: 3px; width: 61px; } .s2 { width: 106px; }
.status svg { margin-left: auto; }

.taskbar { height: 40px; flex: none; background: #0b0b0b; display: flex; color: #fff; font-family: "Open Sans", sans-serif; font-weight: 400; }
.tsearch { width: 344px; background: #f1f1f1; color: #333; display: flex; font-size: 14.500px; line-height: 40px; border-top: 1px solid #c0c0c0; letter-spacing: -.28px; }
.tsearch span { flex: 1; }
.tsearch svg { margin-top: -1px; }
.task { position: relative; }
.run::after { content: ""; position: absolute; left: 5px; right: 4px; bottom: 0; height: 2px; background: #e58be0; }
.active { background: #3c3c3c; } .active::after { left: 0; right: 0; }
.grow { flex: 1; }
.lang { font-size: 12px; line-height: 39px; width: 36px; padding-left: 6px; letter-spacing: -.5px; }
.clock { width: 65px; display: flex; flex-direction: column; align-items: center; font-size: 12px; line-height: 18px; padding-top: 2px; padding-left: 5px; letter-spacing: -.45px; white-space: nowrap; }
.badge { fill: #fff; font: 600 31px "Open Sans", sans-serif; text-anchor: middle; }

.showme { position: absolute; left: 1158px; top: 48px; width: 204px; height: 592px; filter: drop-shadow(2px 2px 2px rgba(0,0,0,.3)); }
.smtab { position: relative; width: 111px; height: 37px; margin-left: 93px; background: #fafafa; border: 1px solid #dcdcdc; border-bottom: 0; display: flex; gap: 6px; padding: 7px 0 0 11px; font: 14px/14px Roboto, sans-serif; color: #333; z-index: 1; }
.smbody { margin-top: -1px; height: 556px; background: #fafafa; border: 1px solid #dcdcdc; padding: 14px 0 0 13px; }
.thumbs { display: grid; grid-template-columns: repeat(3, 56px); gap: 4px; }
.thumbs > svg { width: 56px; height: 42px; background: #fff; outline: 1px solid #dedede; outline-offset: -1px; }
.thumbs > .picked { outline: 2px solid #dd6b39; outline-offset: -2px; }
.tn { font: italic 15px "DejaVu Serif", serif; fill: #777; }
.dk { fill: #3d5c4d; }
.hint { padding-left: 2px; margin-top: 18px; letter-spacing: -.13px; }
.hint p { display: flex; align-items: center; white-space: pre; }
.hint b { font-weight: 600; color: #111; }
.h1 { height: 16px; }
.h2 { height: 16px; margin-top: 8px; gap: 8px; } .h2 svg { margin-top: -5px; }
.hint .h3 { height: 20px; margin-top: 6px; } .hint .h4 { height: 20px; margin-top: 8px; }
.hint p .pill { letter-spacing: .1px; width: 90px; padding-left: 10px; margin-top: -3px; }
.hint p .mea { width: 79px; }
```
